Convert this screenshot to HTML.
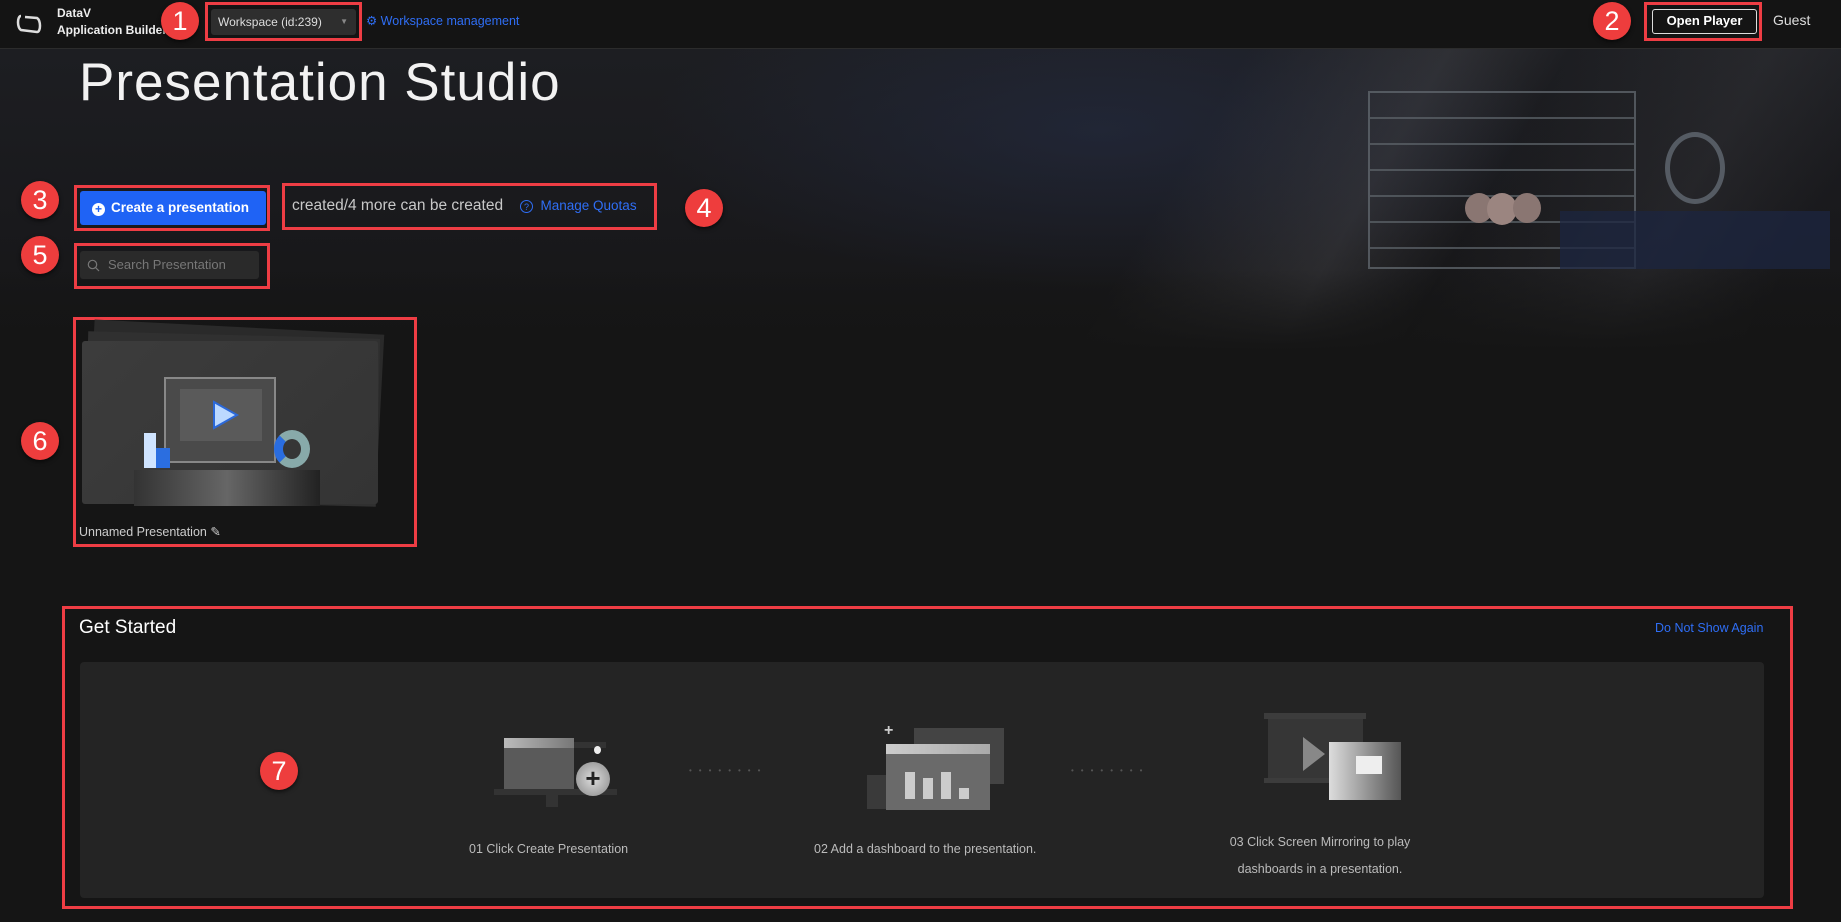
<!DOCTYPE html>
<html><head><meta charset="utf-8"><style>
*{margin:0;padding:0;box-sizing:border-box}
body{width:1841px;height:922px;background:#151515;font-family:"Liberation Sans",sans-serif;color:#ddd;position:relative;overflow:hidden}
.abs{position:absolute}
.badge{position:absolute;width:38px;height:38px;border-radius:50%;background:#ee3d3d;color:#fff;font-size:27px;text-align:center;line-height:38px;box-shadow:0 2px 4px rgba(0,0,0,.6)}
.rb{position:absolute;border:3px solid #ee3d44}
.blue{color:#2f6ef5}
</style></head><body>
<!-- hero background -->
<div class="abs" style="left:0;top:49px;width:1841px;height:300px;background:
linear-gradient(120deg,transparent 62%,rgba(80,80,85,.35) 72%,transparent 78%,rgba(70,70,75,.25) 88%,transparent 95%),
radial-gradient(ellipse 450px 160px at 1100px 80px,rgba(40,50,80,.45),transparent),
linear-gradient(180deg,#1d1e22 0%,#19191c 60%,#151515 100%);"></div>
<div class="abs" style="left:1368px;top:91px;width:268px;height:178px;border:2px solid #666d74;opacity:.7;background:repeating-linear-gradient(180deg,transparent 0 24px,#5f666c 24px 26px)"></div>
<div class="abs" style="left:1465px;top:193px;width:88px;height:40px;">
<div class="abs" style="left:0;top:0;width:28px;height:30px;border-radius:50%;background:#8a7672"></div>
<div class="abs" style="left:22px;top:0;width:30px;height:32px;border-radius:50%;background:#9b8580"></div>
<div class="abs" style="left:48px;top:0;width:28px;height:30px;border-radius:50%;background:#8a7672"></div></div>
<div class="abs" style="left:1665px;top:132px;width:60px;height:72px;border:5px solid #555b63;border-radius:50%"></div>
<div class="abs" style="left:1560px;top:211px;width:270px;height:58px;background:#1c2540;opacity:.75"></div>
<div class="abs" style="left:0;top:270px;width:1841px;height:80px;background:linear-gradient(180deg,transparent,#151515)"></div>

<!-- header -->
<div class="abs" style="left:0;top:0;width:1841px;height:49px;background:#141414;border-bottom:1px solid #2c2c2c"></div>
<svg class="abs" style="left:15px;top:12px" width="28" height="24" viewBox="0 0 28 24"><path d="M6 4 C2 4 2 16 6 18 L22 20 C26 20 26 8 22 6 L10 5" fill="none" stroke="#ddd" stroke-width="2.5"/></svg>
<div class="abs" style="left:57px;top:5px;font-size:12px;font-weight:bold;color:#eee;line-height:17px">DataV<br>Application Builder</div>
<div class="rb" style="left:205px;top:2px;width:157px;height:39px"></div>
<div class="abs" style="left:211px;top:9px;width:145px;height:26px;background:#2e2e2e;border-radius:3px;font-size:12px;color:#ddd;line-height:26px;padding-left:7px">Workspace (id:239)<span style="position:absolute;right:8px;font-size:8px;color:#888">▼</span></div>
<div class="abs blue" style="left:366px;top:13px;font-size:12.5px">⚙ Workspace management</div>
<div class="badge" style="left:161px;top:2px">1</div>
<div class="badge" style="left:1593px;top:2px">2</div>
<div class="rb" style="left:1644px;top:2px;width:118px;height:39px"></div>
<div class="abs" style="left:1652px;top:9px;width:105px;height:25px;border:1.5px solid #ddd;border-radius:3px;font-size:13px;font-weight:bold;color:#fff;text-align:center;line-height:22px">Open Player</div>
<div class="abs" style="left:1773px;top:12px;font-size:14px;color:#ddd">Guest</div>

<div class="abs" style="left:79px;top:52px;font-size:53px;color:#f2f2f2;letter-spacing:1px">Presentation Studio</div>

<div class="badge" style="left:21px;top:181px">3</div>
<div class="rb" style="left:74px;top:185px;width:196px;height:46px"></div>
<div class="abs" style="left:80px;top:191px;width:186px;height:34px;background:#1f63f5;border-radius:3px;color:#fff;font-size:13.5px;font-weight:bold;line-height:34px;padding-left:12px"><span style="display:inline-block;width:13px;height:13px;border-radius:50%;background:#fff;color:#1f63f5;font-size:12px;line-height:13px;text-align:center;vertical-align:-1px;margin-right:6px">+</span>Create a presentation</div>
<div class="rb" style="left:282px;top:183px;width:375px;height:47px"></div>
<div class="abs" style="left:292px;top:197px;font-size:15.5px;color:#c8c8c8">created/4 more can be created</div>
<div class="abs blue" style="left:520px;top:198px;font-size:13.5px"><span style="display:inline-block;width:13px;height:13px;border:1px solid #2f6ef5;border-radius:50%;font-size:9px;text-align:center;line-height:12px;vertical-align:0">?</span>&nbsp; Manage Quotas</div>
<div class="badge" style="left:685px;top:189px">4</div>

<div class="badge" style="left:21px;top:236px">5</div>
<div class="rb" style="left:74px;top:243px;width:196px;height:46px"></div>
<div class="abs" style="left:80px;top:251px;width:179px;height:28px;background:#2a2a2a;border-radius:3px;color:#777;font-size:13px;line-height:28px;padding-left:28px">Search Presentation</div>
<svg class="abs" style="left:87px;top:259px" width="13" height="13"><circle cx="5.5" cy="5.5" r="4.2" fill="none" stroke="#777" stroke-width="1.2"/><path d="M8.5 8.5L12 12" stroke="#777" stroke-width="1.2"/></svg>

<div class="badge" style="left:21px;top:422px">6</div>
<div class="rb" style="left:73px;top:317px;width:344px;height:230px"></div>
<div class="abs" style="left:90px;top:327px;width:290px;height:170px;background:#2a2a2a;transform:rotate(3deg)"></div>
<div class="abs" style="left:86px;top:335px;width:292px;height:168px;background:#303030;transform:rotate(1.5deg)"></div>
<div class="abs" style="left:82px;top:341px;width:296px;height:163px;background:linear-gradient(135deg,#3c3c3c,#343434);border-radius:3px"></div>
<div class="abs" style="left:164px;top:377px;width:112px;height:86px;border:2px solid #888;background:#4a4a4a"></div>
<div class="abs" style="left:180px;top:389px;width:82px;height:52px;background:#5a5a5a"></div>
<svg class="abs" style="left:212px;top:400px" width="28" height="30"><path d="M2 2L25 15L2 28Z" fill="#bcd9ff" stroke="#2b68d8" stroke-width="2"/></svg>
<div class="abs" style="left:144px;top:433px;width:12px;height:35px;background:#cfe4ff"></div>
<div class="abs" style="left:156px;top:448px;width:14px;height:20px;background:#2b6ee0"></div>
<div class="abs" style="left:274px;top:430px;width:36px;height:38px;border:9px solid #8aa;border-left-color:#2a6de0;border-radius:50%"></div>
<div class="abs" style="left:134px;top:470px;width:186px;height:36px;background:linear-gradient(90deg,#333,#666 50%,#222)"></div>
<div class="abs" style="left:79px;top:524px;font-size:12.5px;color:#ccc">Unnamed Presentation ✎</div>

<div class="rb" style="left:62px;top:606px;width:1731px;height:303px"></div>
<div class="abs" style="left:79px;top:617px;font-size:19px;color:#fff">Get Started</div>
<div class="abs blue" style="left:1655px;top:621px;font-size:12.5px">Do Not Show Again</div>
<div class="abs" style="left:80px;top:662px;width:1684px;height:236px;background:#242424;border-radius:4px"></div>
<div class="badge" style="left:260px;top:752px">7</div>

<!-- step 1 -->
<div class="abs" style="left:504px;top:742px;width:102px;height:6px;background:#333"></div>
<div class="abs" style="left:504px;top:738px;width:70px;height:52px;background:#5a5a5a"></div>
<div class="abs" style="left:504px;top:738px;width:70px;height:10px;background:linear-gradient(90deg,#bbb,#777)"></div>
<div class="abs" style="left:494px;top:789px;width:123px;height:6px;background:#333"></div>
<div class="abs" style="left:546px;top:795px;width:12px;height:12px;background:#333"></div>
<div class="abs" style="left:576px;top:762px;width:34px;height:34px;border-radius:50%;background:radial-gradient(#ddd,#888);color:#222;font-size:26px;font-weight:bold;text-align:center;line-height:33px">+</div>
<div class="abs" style="left:594px;top:746px;width:7px;height:8px;border-radius:50%;background:#eee"></div>
<div class="abs" style="left:469px;top:842px;font-size:12.5px;color:#bbb">01 Click Create Presentation</div>
<div class="abs" style="left:689px;top:766px;font-size:8px;color:#555;letter-spacing:7px">••••••••</div>
<!-- step 2 -->
<div class="abs" style="left:914px;top:728px;width:90px;height:56px;background:#444"></div>
<div class="abs" style="left:867px;top:775px;width:22px;height:34px;background:#3a3a3a"></div>
<div class="abs" style="left:886px;top:744px;width:104px;height:66px;background:#6a6a6a"></div>
<div class="abs" style="left:886px;top:744px;width:104px;height:10px;background:linear-gradient(90deg,#ccc,#aaa)"></div>
<div class="abs" style="left:905px;top:772px;width:10px;height:27px;background:#ccc"></div>
<div class="abs" style="left:923px;top:778px;width:10px;height:21px;background:#ccc"></div>
<div class="abs" style="left:941px;top:772px;width:10px;height:27px;background:#ccc"></div>
<div class="abs" style="left:959px;top:788px;width:10px;height:11px;background:#ccc"></div>
<div class="abs" style="left:884px;top:722px;font-size:16px;font-weight:bold;color:#ccc">+</div>
<div class="abs" style="left:814px;top:842px;font-size:12.5px;color:#bbb">02 Add a dashboard to the presentation.</div>
<div class="abs" style="left:1071px;top:766px;font-size:8px;color:#555;letter-spacing:7px">••••••••</div>
<!-- step 3 -->
<div class="abs" style="left:1264px;top:713px;width:102px;height:6px;background:#3c3c3c"></div>
<div class="abs" style="left:1268px;top:719px;width:95px;height:60px;background:#363636"></div>
<div class="abs" style="left:1264px;top:778px;width:102px;height:5px;background:#3c3c3c"></div>
<svg class="abs" style="left:1303px;top:737px" width="22" height="34"><path d="M0 0L22 17L0 34Z" fill="#888"/></svg>
<div class="abs" style="left:1329px;top:742px;width:72px;height:58px;background:linear-gradient(90deg,#ddd,#555)"></div>
<div class="abs" style="left:1356px;top:756px;width:26px;height:18px;background:#eee"></div>
<div class="abs" style="left:1220px;top:829px;width:200px;text-align:center;font-size:12.5px;color:#bbb;line-height:27px">03 Click Screen Mirroring to play<br>dashboards in a presentation.</div>
</body></html>
